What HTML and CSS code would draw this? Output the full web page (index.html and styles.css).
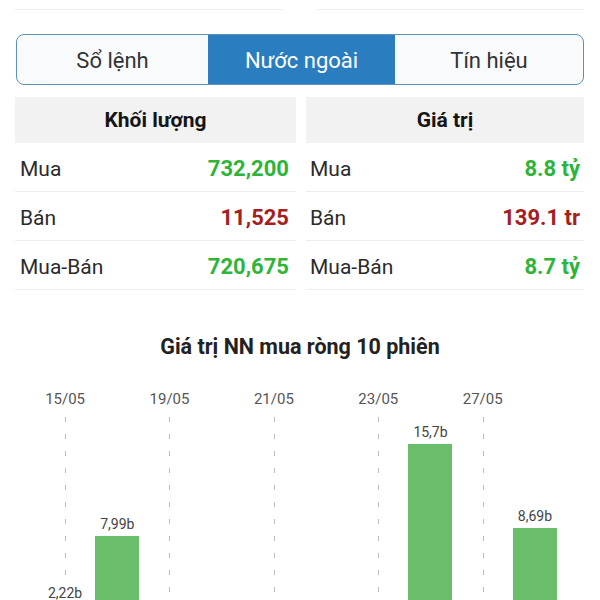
FILE: index.html
```html
<!DOCTYPE html>
<html lang="vi">
<head>
  <meta charset="UTF-8">
  <meta name="viewport" content="width=device-width, initial-scale=1.0">
  <title>Nước ngoài</title>
  <link rel="stylesheet" href="styles.css">
</head>
<body>
  <div class="top-cards">
    <div class="top-card"></div>
    <div class="top-card"></div>
  </div>

  <div class="tabs">
    <div class="tab">Sổ lệnh</div>
    <div class="tab active">Nước ngoài</div>
    <div class="tab">Tín hiệu</div>
  </div>

  <div class="stats">
    <div class="stat-col">
      <div class="stat-head">Khối lượng</div>
      <div class="stat-row"><span>Mua</span><span class="val up">732,200</span></div>
      <div class="stat-row"><span>Bán</span><span class="val down">11,525</span></div>
      <div class="stat-row"><span>Mua-Bán</span><span class="val up">720,675</span></div>
    </div>
    <div class="stat-col right">
      <div class="stat-head">Giá trị</div>
      <div class="stat-row"><span>Mua</span><span class="val up">8.8 tỷ</span></div>
      <div class="stat-row"><span>Bán</span><span class="val down">139.1 tr</span></div>
      <div class="stat-row"><span>Mua-Bán</span><span class="val up">8.7 tỷ</span></div>
    </div>
  </div>

  <div class="chart">
    <div class="chart-title">Giá trị NN mua ròng 10 phiên</div>
    <div class="chart-cols">
      <div class="col dated">
        <div class="date">15/05</div>
        <div class="plot"><div class="bar-label">2,22b</div><div class="bar" style="height:27px"></div></div>
      </div>
      <div class="col">
        <div class="date"></div>
        <div class="plot"><div class="bar-label">7,99b</div><div class="bar" style="height:96px"></div></div>
      </div>
      <div class="col dated">
        <div class="date">19/05</div>
        <div class="plot"></div>
      </div>
      <div class="col">
        <div class="date"></div>
        <div class="plot"></div>
      </div>
      <div class="col dated">
        <div class="date">21/05</div>
        <div class="plot"></div>
      </div>
      <div class="col">
        <div class="date"></div>
        <div class="plot"></div>
      </div>
      <div class="col dated">
        <div class="date">23/05</div>
        <div class="plot"></div>
      </div>
      <div class="col">
        <div class="date"></div>
        <div class="plot"><div class="bar-label">15,7b</div><div class="bar" style="height:188px"></div></div>
      </div>
      <div class="col dated">
        <div class="date">27/05</div>
        <div class="plot"></div>
      </div>
      <div class="col">
        <div class="date"></div>
        <div class="plot"><div class="bar-label">8,69b</div><div class="bar" style="height:104px"></div></div>
      </div>
    </div>
  </div>
</body>
</html>
```

FILE: styles.css
```css
body {
  margin: 0;
  background: #fff;
  font-family: Roboto, "Noto Sans", Arial, sans-serif;
  color: #2b2b2b;
}
.top-cards {
  display: flex;
  gap: 32px;
  padding: 0 16px 0 15px;
}
.top-card {
  flex: 1;
  height: 9px;
  border-bottom: 1px solid #efefef;
}
.tabs {
  display: grid;
  grid-template-columns: 191px 187px 1fr;
  margin: 24px 16px 0 16px;
  height: 49px;
  border: 1.5px solid #5f90b5;
  border-radius: 8px;
  overflow: hidden;
  background: #f8fafb;
}
.tab {
  display: flex;
  align-items: center;
  justify-content: center;
  padding-top: 2px;
  font-size: 22px;
  color: #333;
}
.tab.active {
  background: #2a7dbe;
  color: #fff;
}
.stats {
  display: grid;
  grid-template-columns: 281px 1fr;
  gap: 10px;
  margin: 12px 16px 0 15px;
}
.stat-head {
  height: 46px;
  background: #f2f2f2;
  display: flex;
  align-items: center;
  justify-content: center;
  font-size: 21px;
  font-weight: bold;
  color: #151515;
}
.stat-row {
  display: flex;
  justify-content: space-between;
  align-items: center;
  height: 48px;
  padding: 3px 7px 0 5px;
  box-sizing: border-box;
  height: 49px;
  border-bottom: 1px solid #eeeeee;
  font-size: 21px;
  color: #2b2b2b;
}
.stat-col.right .stat-row {
  padding: 3px 4px 0 4px;
}
.val {
  font-size: 22px;
  font-weight: bold;
}
.up {
  color: #2fb43a;
}
.down {
  color: #a41e22;
}
.chart {
  margin-top: 44px;
}
.chart-title {
  text-align: center;
  font-size: 21.5px;
  line-height: 26px;
  font-weight: bold;
  color: #222;
}
.chart-cols {
  display: grid;
  grid-template-columns: repeat(10, 1fr);
  padding: 29px 39px 0 39px;
}
.col {
  display: flex;
  flex-direction: column;
  align-items: center;
}
.date {
  height: 20px;
  line-height: 20px;
  font-size: 15px;
  color: #555;
  margin-bottom: 8px;
}
.plot {
  position: relative;
  width: 100%;
  height: 215px;
  display: flex;
  flex-direction: column;
  justify-content: flex-end;
  align-items: center;
}
.col.dated .plot::before {
  content: "";
  position: absolute;
  top: 0;
  bottom: 0;
  left: 50%;
  width: 1px;
  background: repeating-linear-gradient(to bottom, #bdbdbd 0 5px, transparent 5px 17px);
}
.bar-label {
  position: relative;
  font-size: 14px;
  line-height: 16px;
  color: #444;
  margin-bottom: 4px;
  background: #fff;
}
.bar {
  width: 44px;
  background: #6bbe69;
}
```
